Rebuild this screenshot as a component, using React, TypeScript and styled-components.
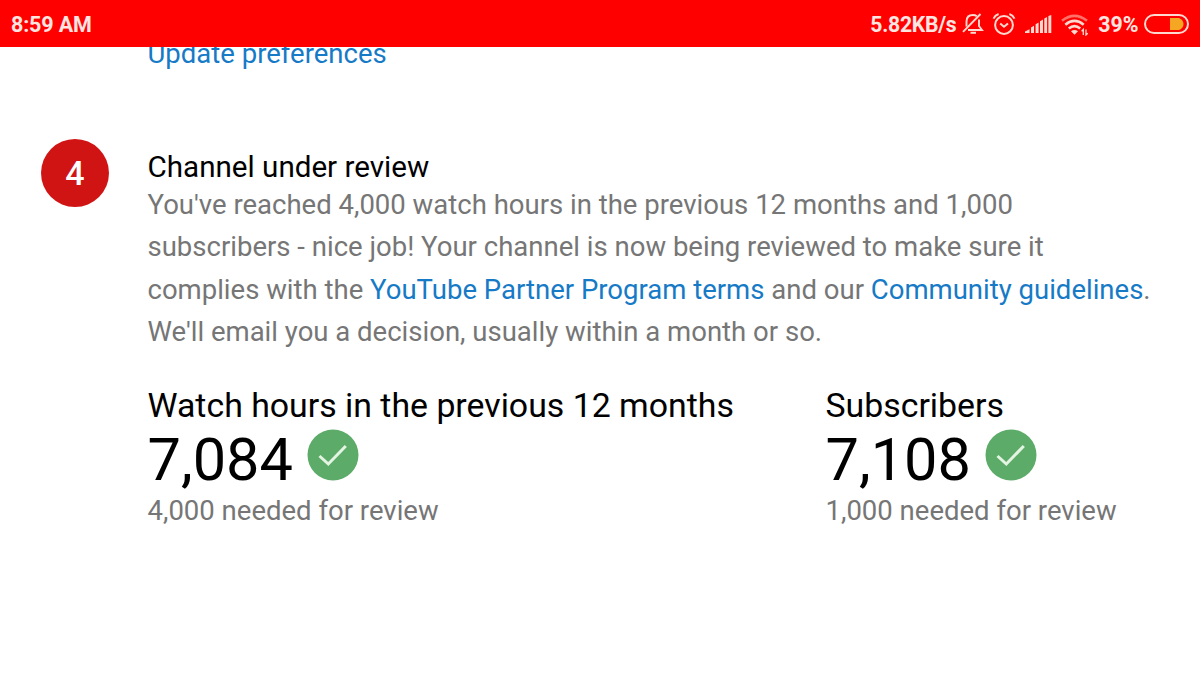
import React from "react";
import styled, { createGlobalStyle } from "styled-components";

const GlobalStyle = createGlobalStyle`
  * { box-sizing: border-box; }
  body { margin: 0; background: #fff; }
`;

const Screen = styled.div`
  display: flex;
  flex-direction: column;
  width: 1200px;
  height: 675px;
  overflow: hidden;
  background: #fff;
  color: #000;
  font-family: Roboto, "Liberation Sans", sans-serif;
`;

const StatusBar = styled.header`
  display: flex;
  justify-content: space-between;
  align-items: center;
  flex: none;
  height: 47px;
  padding: 2px 11.5px 0 11px;
  background: #ff0000;
  color: #ffe4e0;
`;

const StatusText = styled.span<{ $size?: number; $spacing?: number; $gap?: number }>`
  margin-left: ${(p) => p.$gap ?? 0}px;
  font-size: ${(p) => p.$size ?? 21.5}px;
  font-weight: 700;
  line-height: 26px;
  letter-spacing: ${(p) => p.$spacing ?? 0}px;
  white-space: nowrap;
`;

const StatusGroup = styled.div`
  display: flex;
  align-items: center;
`;

const StatusIcon = styled.svg<{ $gap: number }>`
  display: block;
  flex: none;
  margin-left: ${(p) => p.$gap}px;
`;

const Content = styled.main`
  flex: 1;
  min-height: 0;
  overflow: hidden;
`;

const Link = styled.a`
  color: #167ac6;
  text-decoration: none;
`;

const PreviousStep = styled.p`
  margin: -14px 0 0 147.5px;
  font-size: 27.53px;
  line-height: 42.5px;
`;

const Step = styled.section`
  display: grid;
  grid-template-columns: 106.5px 1fr;
  margin: 63px 0 0 41px;
`;

const StepNumber = styled.div`
  display: flex;
  align-items: center;
  justify-content: center;
  width: 68px;
  height: 68px;
  border-radius: 50%;
  background: #d01414;
  color: #fff;
  font-size: 34px;
  font-weight: 500;
`;

const StepBody = styled.div`
  padding-top: 8px;
`;

const Title = styled.h2`
  margin: 0;
  font-size: 29.6px;
  font-weight: 400;
  line-height: 40px;
`;

const Description = styled.p`
  margin: -3px 0 0;
  color: #767676;
  font-size: 27.53px;
  line-height: 42.5px;
  white-space: nowrap;
`;

const Stats = styled.div`
  display: grid;
  grid-template-columns: 678px 1fr;
  margin-top: 32px;
`;

const StatLabel = styled.div`
  font-size: 33.85px;
  line-height: 40px;
`;

const StatValue = styled.div`
  display: flex;
  align-items: center;
  gap: 14px;
  height: 62px;
  margin-top: 3.5px;
  font-size: 59.5px;
  line-height: 62px;
`;

const CheckIcon = styled.svg`
  display: block;
  margin-bottom: 10px;
`;

const StatNote = styled.div`
  color: #767676;
  font-size: 27.53px;
  line-height: 40px;
`;

function Check() {
  return (
    <CheckIcon width="52" height="52" viewBox="0 0 52 52">
      <circle cx="26" cy="26" r="25.5" fill="#5cab68" />
      <path d="M12.5 27 L21.3 35 L38.8 17" fill="none" stroke="#e4f4e2" strokeWidth="3" />
    </CheckIcon>
  );
}

function Stat({ label, value, note }: { label: string; value: string; note: string }) {
  return (
    <div>
      <StatLabel>{label}</StatLabel>
      <StatValue>
        <span>{value}</span>
        <Check />
      </StatValue>
      <StatNote>{note}</StatNote>
    </div>
  );
}

const ink = "#ffd9cf";

function MutedBell() {
  return (
    <StatusIcon $gap={5.5} width="22" height="24" viewBox="0 0 22 24" fill="none" stroke={ink} strokeWidth="1.9">
      <path d="M4.5 13.5 V8.5 C4.5 4.5 7 2 11 2 C12.5 2 13.8 2.4 14.8 3.2 M17 6.5 V13 L20 17 H6" />
      <path d="M1 18.8 L18.5 1" />
      <path d="M8.5 19.8 H14" strokeWidth="2" />
    </StatusIcon>
  );
}

function AlarmClock() {
  return (
    <StatusIcon $gap={8.5} width="24" height="24" viewBox="0 0 24 24" fill="none" stroke={ink} strokeWidth="2">
      <circle cx="12" cy="12" r="8.9" />
      <path d="M1.5 5.6 Q3 2.2 6.6 1 M22.5 5.6 Q21 2.2 17.4 1" />
      <path d="M8.2 10.4 L12 13.7 L16 10.4" />
    </StatusIcon>
  );
}

function Signal() {
  return (
    <StatusIcon $gap={9} width="27" height="20" viewBox="0 0 27 20" fill={ink}>
      <path d="M0 18 V16.5 L4.5 14.2 V18Z M6 18 V12.4 L9 10.8 V18Z M10.6 18 V9.2 L13.6 7.5 V18Z M15 18 V6.2 L18 4.4 V18Z M19.3 18 V3.6 L22.1 2 V18Z M23.4 18 V1 L26.3 0 V18Z" />
    </StatusIcon>
  );
}

function Wifi() {
  return (
    <StatusIcon $gap={9} width="28" height="22" viewBox="0 0 28 22" fill="none" stroke={ink} strokeWidth="2.6">
      <path d="M1 6.8 Q13.5 -3.1 26 6.8" stroke="#ff7168" />
      <path d="M4.3 10.7 Q13.5 3.2 22.7 10.7" />
      <path d="M7.8 14.6 Q13.5 9.8 19.2 14.6" />
      <path d="M10 17.3 Q13.5 14.5 17 17.3 L13.5 20.8Z" fill={ink} stroke="none" />
      <path d="M22.3 21 V15.5 L20.6 17.3 M25 15.5 V21 L26.7 19.2" strokeWidth="1.3" />
    </StatusIcon>
  );
}

function Battery() {
  return (
    <StatusIcon $gap={5} width="45" height="22" viewBox="0 0 45 22">
      <rect x="1" y="1" width="43" height="18" rx="9" fill="none" stroke={ink} strokeWidth="2" />
      <path d="M26 4 H35 Q39.5 6 39.5 10 Q39.5 14 35 16 H26Z" fill="#f5a623" />
    </StatusIcon>
  );
}

export default function App() {
  return (
    <Screen>
      <GlobalStyle />
      <StatusBar>
        <StatusText $spacing={-0.15}>8:59 AM</StatusText>
        <StatusGroup>
          <StatusText $size={21.2} $spacing={-0.3}>5.82KB/s</StatusText>
          <MutedBell />
          <AlarmClock />
          <Signal />
          <Wifi />
          <StatusText $gap={9} $size={21.3}>39%</StatusText>
          <Battery />
        </StatusGroup>
      </StatusBar>
      <Content>
        <PreviousStep>
          <Link>Update preferences</Link>
        </PreviousStep>
        <Step>
          <StepNumber>4</StepNumber>
          <StepBody>
            <Title>Channel under review</Title>
            <Description>
              You've reached 4,000 watch hours in the previous 12 months and 1,000
              <br />
              subscribers - nice job! Your channel is now being reviewed to make sure it
              <br />
              complies with the <Link>YouTube Partner Program terms</Link> and our{" "}
              <Link>Community guidelines</Link>.
              <br />
              We'll email you a decision, usually within a month or so.
            </Description>
            <Stats>
              <Stat label="Watch hours in the previous 12 months" value="7,084" note="4,000 needed for review" />
              <Stat label="Subscribers" value="7,108" note="1,000 needed for review" />
            </Stats>
          </StepBody>
        </Step>
      </Content>
    </Screen>
  );
}
